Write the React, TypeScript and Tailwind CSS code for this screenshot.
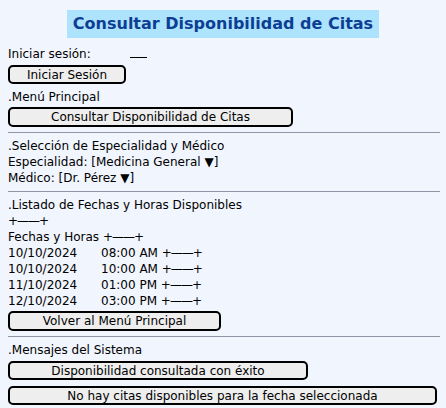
import React from "react";

const font = { fontFamily: '"DejaVu Sans", sans-serif' };

function Btn({ label, w }: { label: string; w: string }) {
  return (
    <div
      className={`${w} rounded-[5px] border-2 border-black bg-[#eeeeee] flex items-center justify-center leading-none`}
    >
      {label}
    </div>
  );
}

function Line({ children }: { children: React.ReactNode }) {
  return <div className="h-4 leading-4 whitespace-pre">{children}</div>;
}

function Sep() {
  return <div className="h-px bg-[#8f97a6] w-[432px] my-[5px]" />;
}

const Bar = () => <span className="tracking-[-1px]">+——+</span>;

const slots = [
  ["10/10/2024", "08:00 AM"],
  ["10/10/2024", "10:00 AM"],
  ["11/10/2024", "01:00 PM"],
  ["12/10/2024", "03:00 PM"],
];

export default function App() {
  return (
    <div className="w-[446px] h-[408px] bg-[#f1f5fe] text-black text-[12px] pl-2 overflow-hidden" style={font}>
      <div className="flex justify-center pt-[10px] pr-2">
        <div className="h-[28px] px-[6px] bg-[#aee3fd] text-[#0c3f93] font-bold text-[16px] flex items-center">
          Consultar Disponibilidad de Citas
        </div>
      </div>

      <div className="mt-[8px] flex h-4 leading-4">
        <span className="w-[122px]">Iniciar sesión:</span>
        <span className="w-[17px] h-[12px] border-b border-black" />
      </div>
      <div className="mt-[3px]">
        <Btn label="Iniciar Sesión" w="w-[118px] h-[19px]" />
      </div>
      <div className="mt-[5px]">
        <Line>.Menú Principal</Line>
      </div>
      <div className="mt-[2px]">
        <Btn label="Consultar Disponibilidad de Citas" w="w-[285px] h-[20px]" />
      </div>

      <Sep />
      <Line>.Selección de Especialidad y Médico</Line>
      <Line>Especialidad: [Medicina General ▼]</Line>
      <Line>Médico: [Dr. Pérez ▼]</Line>

      <Sep />
      <Line>.Listado de Fechas y Horas Disponibles</Line>
      <Line>
        <Bar />
      </Line>
      <Line>
        Fechas y Horas <Bar />
      </Line>
      {slots.map(([d, t]) => (
        <div key={d + t} className="h-4 leading-4 flex">
          <span className="w-[93px]">{d}</span>
          <span>
            {t} <Bar />
          </span>
        </div>
      ))}
      <div className="mt-[2px]">
        <Btn label="Volver al Menú Principal" w="w-[213px] h-[20px]" />
      </div>

      <Sep />
      <Line>.Mensajes del Sistema</Line>
      <div className="mt-[3px]">
        <Btn label="Disponibilidad consultada con éxito" w="w-[300px] h-[19px]" />
      </div>
      <div className="mt-[6px]">
        <Btn label="No hay citas disponibles para la fecha seleccionada" w="w-[429px] h-[19px]" />
      </div>
    </div>
  );
}
